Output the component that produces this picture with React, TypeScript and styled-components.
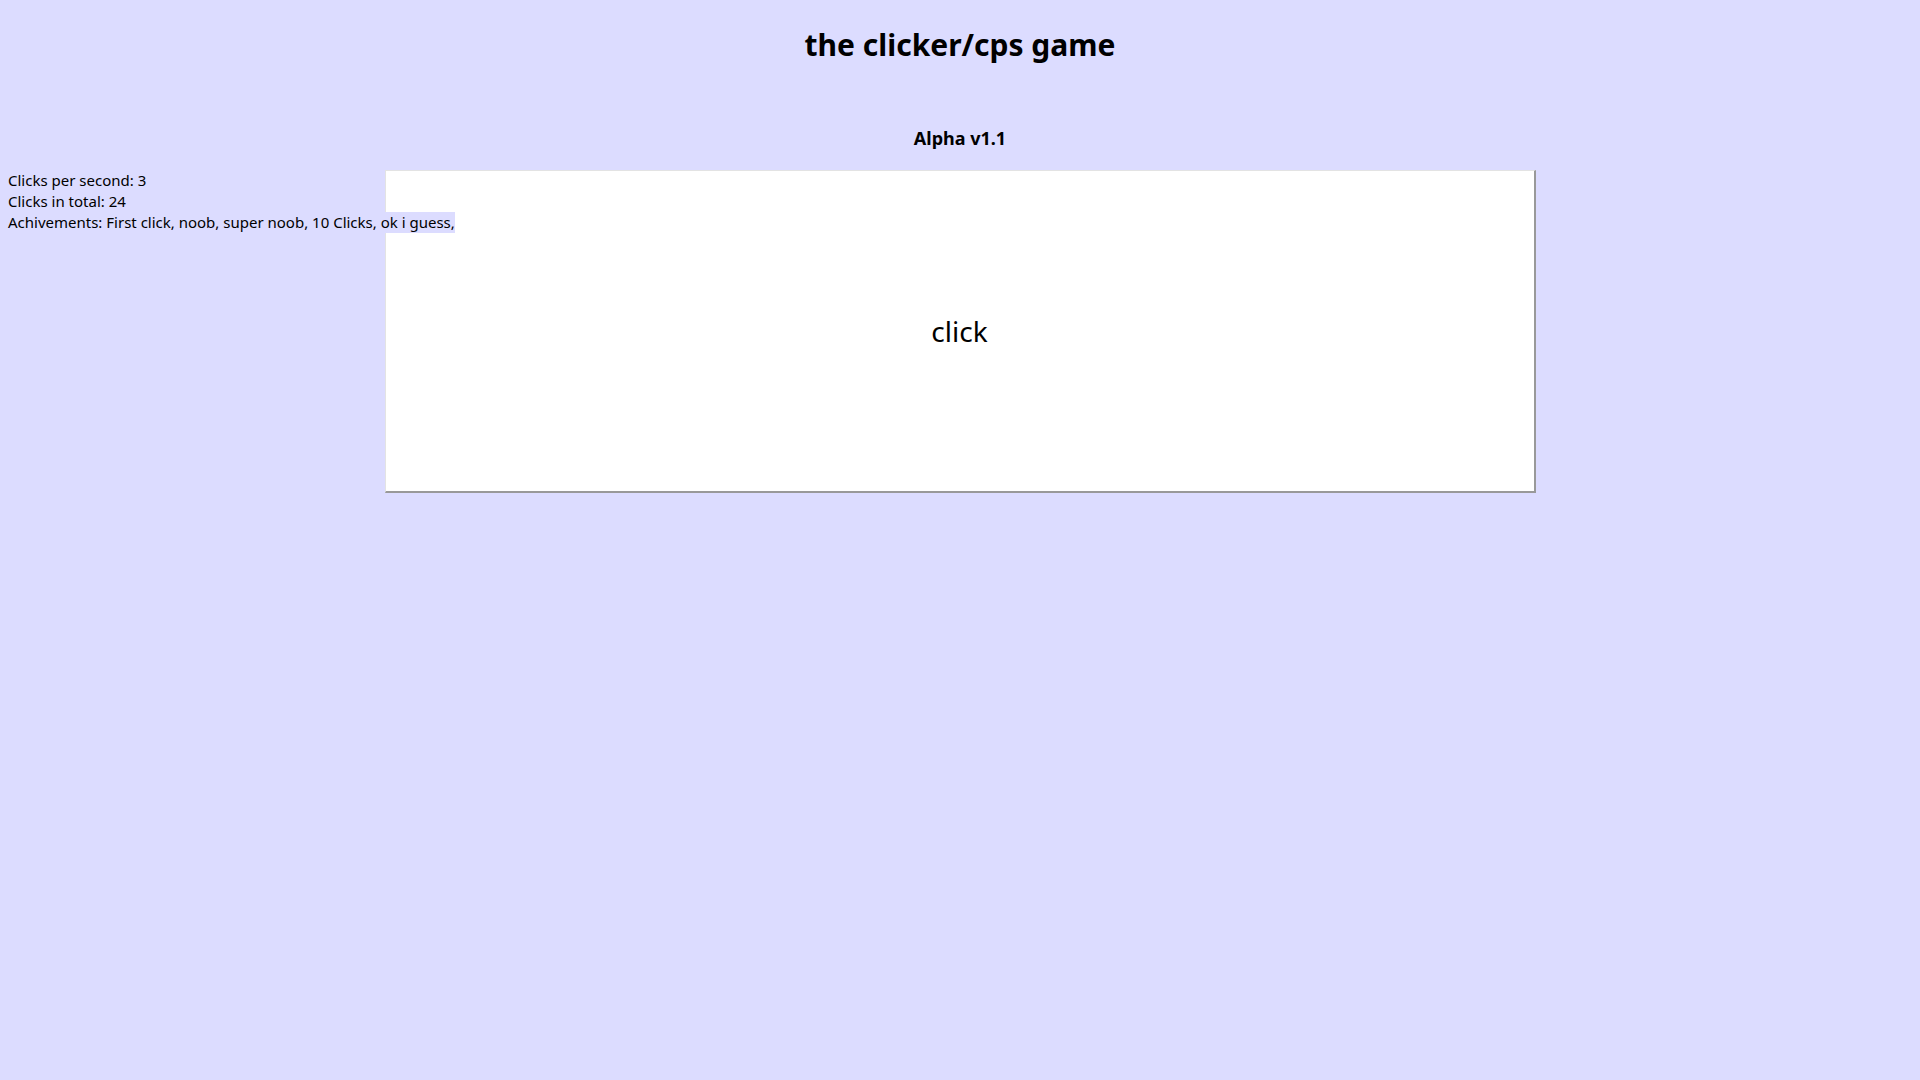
import styled, { createGlobalStyle } from 'styled-components'

const GlobalStyle = createGlobalStyle`
  html, body {
    margin: 0;
    padding: 0;
    background: #dcdcff;
  }
  body {
    font-family: 'Noto Sans', 'Open Sans', sans-serif;
    color: #000;
  }
`

const Page = styled.div`
  min-height: 100vh;
  background: #dcdcff;
  display: flex;
  flex-direction: column;
  align-items: center;
`

const Title = styled.h1`
  margin: 22.5px 0 0;
  font-size: 30px;
  line-height: 43px;
  font-weight: 700;
  text-align: center;
`

const Version = styled.h3`
  margin: 60.5px 0 0;
  font-size: 18px;
  line-height: 25.5px;
  font-weight: 700;
  text-align: center;
`

const GameArea = styled.div`
  position: relative;
  align-self: stretch;
  margin-top: 18.5px;
  display: flex;
  justify-content: center;
`

const Stats = styled.div`
  position: absolute;
  top: 0;
  left: 8px;
  z-index: 1;
  font-size: 15px;
  line-height: 21px;
`

const StatLine = styled.div`
  width: fit-content;
  background: #dcdcff;
`

const ClickButton = styled.button`
  width: 1151px;
  height: 323px;
  box-sizing: border-box;
  background: #fff;
  border-style: solid;
  border-width: 1px 2px 2px 1px;
  border-color: #e3e3e3 #999 #999 #e3e3e3;
  font-family: 'Noto Sans', 'Open Sans', sans-serif;
  font-size: 28px;
  color: #000;
  padding: 0;
  cursor: pointer;
`

const stats = {
  cps: 3,
  total: 24,
  achievements: ['First click', 'noob', 'super noob', '10 Clicks', 'ok i guess'],
}

const App = () => {
  return (
    <>
      <GlobalStyle />
      <Page>
        <Title>the clicker/cps game</Title>
        <Version>Alpha v1.1</Version>
        <GameArea>
          <Stats>
            <StatLine>Clicks per second: {stats.cps}</StatLine>
            <StatLine>Clicks in total: {stats.total}</StatLine>
            <StatLine>Achivements: {stats.achievements.map((a) => a + ', ')}</StatLine>
          </Stats>
          <ClickButton>click</ClickButton>
        </GameArea>
      </Page>
    </>
  )
}

export default App
